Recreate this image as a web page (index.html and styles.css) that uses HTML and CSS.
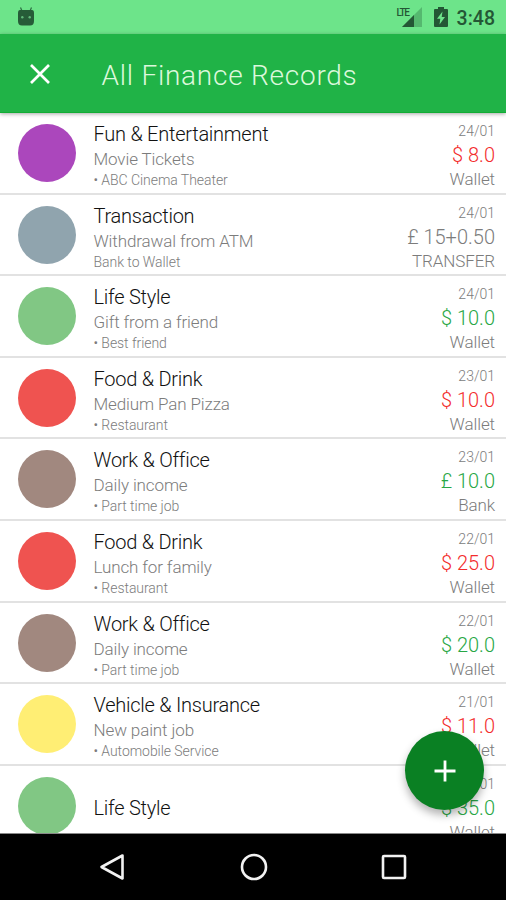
FILE: index.html
```html
<!DOCTYPE html>
<html lang="en">
<head>
    <meta charset="UTF-8">
    <meta name="viewport" content="width=device-width, initial-scale=1.0">
    <title>All Finance Records</title>
    <link rel="stylesheet" href="styles.css">
</head>
<body>
    <div class="status-bar">
        <svg class="droid" width="18" height="20" viewBox="0 0 18 20">
            <path d="M3.500 0.500L5 4M14.500 0.500L13 4" stroke="#2d6b42" stroke-width="1.200" fill="none"/>
            <path d="M3 3H15Q17 3 17 6V14Q17 18.500 13 18.500H5Q1 18.500 1 14V6Q1 3 3 3Z" fill="#265c38"/>
            <circle cx="5.300" cy="10.300" r="1.200" fill="#62b87b"/>
            <circle cx="12.700" cy="10.300" r="1.200" fill="#62b87b"/>
        </svg>
        <div class="status-icons">
            <span class="lte">LTE</span>
            <svg class="signal" width="20" height="20" viewBox="0 0 20 20">
                <path d="M20 0V20H0Z" fill="#55b86f"/>
                <path d="M12 8V20H0Z" fill="#245735"/>
            </svg>
            <svg class="battery" width="14" height="20" viewBox="0 0 14 20">
                <path d="M4 0H10V2H13Q14 2 14 3V19Q14 20 13 20H1Q0 20 0 19V3Q0 2 1 2H4Z" fill="#245735"/>
                <path d="M8.500 4.500L3 11.800H6.300L5.500 17.500L11 10H7.700Z" fill="#6de48a"/>
            </svg>
            <span class="clock">3:48</span>
        </div>
    </div>
    <header>
        <svg class="close" width="20" height="20" viewBox="0 0 20 20">
            <path d="M1 1L19 19M19 1L1 19" stroke="#fff" stroke-width="2.700" fill="none"/>
        </svg>
        <h1>All Finance Records</h1>
    </header>
    <main>
        <ul class="records">
            <li>
                <span class="dot purple"></span>
                <div class="info"><h2>Fun &amp; Entertainment</h2><p>Movie Tickets</p><small>• ABC Cinema Theater</small></div>
                <div class="amount"><span class="date">24/01</span><span class="price expense">$ 8.0</span><span class="account">Wallet</span></div>
            </li>
            <li>
                <span class="dot grey"></span>
                <div class="info"><h2>Transaction</h2><p>Withdrawal from ATM</p><small>Bank to Wallet</small></div>
                <div class="amount"><span class="date">24/01</span><span class="price transfer">£ 15+0.50</span><span class="account">TRANSFER</span></div>
            </li>
            <li>
                <span class="dot green"></span>
                <div class="info"><h2>Life Style</h2><p>Gift from a friend</p><small>• Best friend</small></div>
                <div class="amount"><span class="date">24/01</span><span class="price income">$ 10.0</span><span class="account">Wallet</span></div>
            </li>
            <li>
                <span class="dot red"></span>
                <div class="info"><h2>Food &amp; Drink</h2><p>Medium Pan Pizza</p><small>• Restaurant</small></div>
                <div class="amount"><span class="date">23/01</span><span class="price expense">$ 10.0</span><span class="account">Wallet</span></div>
            </li>
            <li>
                <span class="dot brown"></span>
                <div class="info"><h2>Work &amp; Office</h2><p>Daily income</p><small>• Part time job</small></div>
                <div class="amount"><span class="date">23/01</span><span class="price income">£ 10.0</span><span class="account">Bank</span></div>
            </li>
            <li>
                <span class="dot red"></span>
                <div class="info"><h2>Food &amp; Drink</h2><p>Lunch for family</p><small>• Restaurant</small></div>
                <div class="amount"><span class="date">22/01</span><span class="price expense">$ 25.0</span><span class="account">Wallet</span></div>
            </li>
            <li>
                <span class="dot brown"></span>
                <div class="info"><h2>Work &amp; Office</h2><p>Daily income</p><small>• Part time job</small></div>
                <div class="amount"><span class="date">22/01</span><span class="price income">$ 20.0</span><span class="account">Wallet</span></div>
            </li>
            <li>
                <span class="dot yellow"></span>
                <div class="info"><h2>Vehicle &amp; Insurance</h2><p>New paint job</p><small>• Automobile Service</small></div>
                <div class="amount"><span class="date">21/01</span><span class="price expense">$ 11.0</span><span class="account">Wallet</span></div>
            </li>
            <li>
                <span class="dot green"></span>
                <div class="info single"><h2>Life Style</h2></div>
                <div class="amount"><span class="date">21/01</span><span class="price income">$ 35.0</span><span class="account">Wallet</span></div>
            </li>
        </ul>
        <button class="add" aria-label="Add record">
            <svg width="22" height="22" viewBox="0 0 22 22">
                <path d="M11 0.500V21.500M0.500 11H21.500" stroke="#fff" stroke-width="2.800" fill="none"/>
            </svg>
        </button>
    </main>
    <nav>
        <svg width="28" height="28" viewBox="0 0 28 28">
            <path d="M23.500 2.500L2.500 14L23.500 25.500Z"/>
        </svg>
        <svg width="28" height="28" viewBox="0 0 28 28">
            <circle cx="14" cy="14" r="12"/>
        </svg>
        <svg width="28" height="28" viewBox="0 0 28 28">
            <rect x="3" y="3" width="22" height="22" rx="1"/>
        </svg>
    </nav>
</body>
</html>
```
FILE: styles.css
```css
* {
    box-sizing: border-box;
}

body {
    margin: 0;
    height: 900px;
    display: flex;
    flex-direction: column;
    overflow: hidden;
    background-color: #fff;
    font-family: Roboto, sans-serif;
    font-weight: 300;
}

h1, h2, p, ul {
    margin: 0;
    padding: 0;
    font-weight: 300;
}

.status-bar {
    height: 34px;
    flex: none;
    display: flex;
    justify-content: space-between;
    padding: 7px 11px 0 17px;
    background-color: #6de48a;
    color: #245735;
}

.status-icons {
    display: flex;
}

.lte {
    margin-right: -7px;
    font-size: 10px;
    line-height: 11px;
    font-weight: 500;
    letter-spacing: -1.3px;
}

.signal {
    margin-right: 12px;
}

.battery {
    margin-right: 9px;
}

.clock {
    font-size: 19.5px;
    line-height: 24px;
    font-weight: 500;
}

header {
    height: 79px;
    flex: none;
    display: flex;
    align-items: center;
    padding-left: 30px;
    background-color: #20b347;
    border-bottom: 1px solid #12ad35;
    box-shadow: 0 1px 4px rgba(0, 0, 0, 0.35);
    z-index: 1;
}

.close {
    margin-top: 1px;
}

header h1 {
    margin: 4px 0 0 51.5px;
    color: #dcf8dc;
    font-size: 28px;
    letter-spacing: 0.75px;
}

main {
    position: relative;
    flex: 1;
    overflow: hidden;
}

.records {
    list-style: none;
}

.records li {
    height: 81.6px;
    display: flex;
    padding: 0 11px 0 18px;
    border-bottom: 2px solid #e2e2e2;
}

.dot {
    width: 58px;
    height: 58px;
    margin: 11px 17.5px 0 0;
    border-radius: 50%;
}

.purple { background-color: #ab47bc; }
.grey { background-color: #90a4ae; }
.green { background-color: #81c784; }
.red { background-color: #ef5350; }
.brown { background-color: #a1887f; }
.yellow { background-color: #ffee74; }

.info {
    flex: 1;
    padding-top: 8px;
}

.info h2 {
    color: #111;
    font-size: 20px;
    line-height: 26px;
    letter-spacing: -0.25px;
}

.info p {
    color: #7c7c7c;
    font-size: 17px;
    line-height: 24px;
    letter-spacing: -0.12px;
}

.info small {
    display: block;
    color: #7c7c7c;
    font-size: 14px;
    line-height: 18px;
    letter-spacing: -0.05px;
}

.single {
    padding-top: 29px;
}

.amount {
    display: flex;
    flex-direction: column;
    align-items: flex-end;
    padding-top: 8px;
    color: #7c7c7c;
}

.date {
    font-size: 14px;
    line-height: 21px;
}

.price {
    font-size: 20px;
    line-height: 26px;
}

.account {
    font-size: 17px;
    line-height: 23px;
    letter-spacing: -0.1px;
}

.expense { color: #f32c2c; }
.income { color: #28a745; }

.add {
    position: absolute;
    right: 22px;
    bottom: 23px;
    width: 79px;
    height: 79px;
    display: flex;
    align-items: center;
    justify-content: center;
    padding: 0;
    border: none;
    border-radius: 50%;
    background-color: #0a8023;
    box-shadow: 0 5px 9px rgba(0, 0, 0, 0.3);
}

nav {
    height: 67px;
    flex: none;
    display: flex;
    align-items: center;
    justify-content: center;
    gap: 112.5px;
    padding-left: 1px;
    background-color: #000;
    border-top: 1px solid #888;
}

nav svg {
    fill: none;
    stroke: #f2f2f2;
    stroke-width: 2.6;
    stroke-linejoin: round;
}
```
